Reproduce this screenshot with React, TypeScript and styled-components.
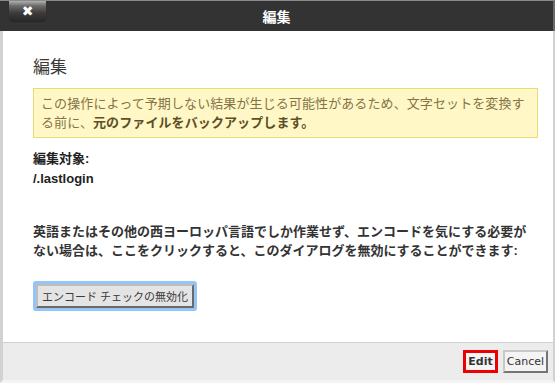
import styled, { createGlobalStyle } from "styled-components";

const GlobalStyle = createGlobalStyle`
  html, body {
    margin: 0;
    padding: 0;
    background: #ffffff;
  }
  body {
    font-family: "Liberation Sans", "Noto Sans CJK JP", sans-serif;
  }
`;

const JP = `"Liberation Sans", "Noto Sans CJK JP", sans-serif`;

export default function App() {
  return (
    <>
      <GlobalStyle />
      <Dialog>
        <TitleBar>
          <CloseButton aria-label="close">✖</CloseButton>
          <Title>編集</Title>
        </TitleBar>
        <Panel>
          <Body>
            <Heading>編集</Heading>
            <Notice>
              この操作によって予期しない結果が生じる可能性があるため、文字セットを変換する前に、
              <strong>元のファイルをバックアップします。</strong>
            </Notice>
            <Target>
              <div>編集対象:</div>
              <div>/.lastlogin</div>
            </Target>
            <Message>
              英語またはその他の西ヨーロッパ言語でしか作業せず、エンコードを気にする必要がない場合は、ここをクリックすると、このダイアログを無効にすることができます:
            </Message>
            <EncodeButton>エンコード チェックの無効化</EncodeButton>
          </Body>
          <Footer>
            <FooterButton $primary>Edit</FooterButton>
            <FooterButton>Cancel</FooterButton>
          </Footer>
        </Panel>
      </Dialog>
    </>
  );
}

const Dialog = styled.div`
  width: 555px;
  height: 383px;
  display: flex;
  flex-direction: column;
  overflow: hidden;
`;

const TitleBar = styled.div`
  position: relative;
  height: 30px;
  background: #333333;
  border-top: 1px solid #8a8a8a;
  border-right: 2px solid #6a6a6a;
  display: flex;
  align-items: center;
  justify-content: center;
`;

const CloseButton = styled.button`
  position: absolute;
  left: 9px;
  top: 0;
  width: 37px;
  height: 20px;
  padding: 0;
  border: none;
  border-radius: 0 0 4px 4px;
  background: linear-gradient(#b0b0b0 0%, #6a6a6a 25%, #3e3a3a 60%, #2c2828 100%);
  box-shadow: 0 1px 1px #1c2a30;
  color: #ffffff;
  font-family: "DejaVu Sans", sans-serif;
  font-size: 14px;
  line-height: 20px;
`;

const Title = styled.div`
  color: #ffffff;
  font-family: ${JP};
  font-weight: bold;
  font-size: 14px;
  margin-top: -1px;
`;

const Panel = styled.div`
  flex: 1;
  display: flex;
  flex-direction: column;
  border-left: 3px solid #d2d2d2;
  border-right: 2px solid #d2d2d2;
  border-bottom: 3px solid #f4f4f4;
`;

const Body = styled.div`
  height: 311px;
  box-sizing: border-box;
  padding: 26px 12px 0 30px;
  display: flex;
  flex-direction: column;
  align-items: flex-start;
  color: #333333;
  font-family: ${JP};
`;

const Heading = styled.h2`
  margin: 0;
  font-size: 17px;
  line-height: 22px;
  font-weight: normal;
  color: #3a3a3a;
`;

const Notice = styled.div`
  margin-top: 9px;
  width: 505px;
  box-sizing: border-box;
  padding: 5px 7px;
  background: #fff8c6;
  border: 1px solid #e8dc74;
  color: #857348;
  font-size: 13px;
  line-height: 19px;
  letter-spacing: 0.1px;

  strong {
    color: #5e4e28;
  }
`;

const Target = styled.div`
  margin-top: 11px;
  font-size: 13px;
  line-height: 20px;
  font-weight: bold;
  color: #222222;
`;

const Message = styled.p`
  margin: 33px 0 0;
  width: 505px;
  font-size: 13px;
  line-height: 19px;
  font-weight: bold;
  color: #333333;
`;

const EncodeButton = styled.button`
  margin: 24px 0 0 3px;
  height: 24px;
  padding: 0 4px;
  background: #e4e4e4;
  border: 2px outset #bdbdbd;
  border-radius: 1px;
  box-shadow: 0 0 0 3px #94c4f8;
  color: #3a3a3a;
  font-family: ${JP};
  font-size: 11px;
`;

const Footer = styled.div`
  flex: 1;
  background: #ececec;
  border-top: 1px solid #cfcfcf;
  display: flex;
  align-items: center;
  justify-content: flex-end;
  gap: 5px;
  padding-right: 5px;
`;

const FooterButton = styled.button<{ $primary?: boolean }>`
  height: 23px;
  box-sizing: border-box;
  padding: 0 2px;
  background: #f4f4f4;
  border: ${(p) => (p.$primary ? "3px solid #ee0000" : "2px outset #c8c8c8")};
  color: #333333;
  font-family: "DejaVu Sans", sans-serif;
  font-size: 11px;
  font-weight: ${(p) => (p.$primary ? "bold" : "normal")};
`;
